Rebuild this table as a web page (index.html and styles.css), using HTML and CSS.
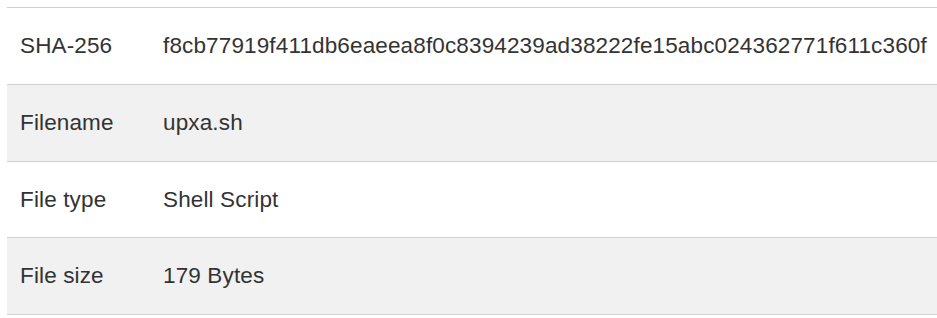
FILE: index.html
```html
<!DOCTYPE html>
<html lang="en">
<head>
    <meta charset="UTF-8">
    <meta name="viewport" content="width=device-width, initial-scale=1.0">
    <title>File details</title>
    <link rel="stylesheet" href="styles.css">
</head>
<body>
    <table class="details">
        <tbody>
            <tr>
                <th>SHA-256</th>
                <td>f8cb77919f411db6eaeea8f0c8394239ad38222fe15abc024362771f611c360f</td>
            </tr>
            <tr>
                <th>Filename</th>
                <td>upxa.sh</td>
            </tr>
            <tr>
                <th>File type</th>
                <td>Shell Script</td>
            </tr>
            <tr>
                <th>File size</th>
                <td>179 Bytes</td>
            </tr>
        </tbody>
    </table>
</body>
</html>
```

FILE: styles.css
```css
body {
    margin: 7px 0 0 7px;
    background: #fff;
    font-family: "Liberation Sans", Arial, sans-serif;
    color: #333;
}
.details {
    width: 930px;
    table-layout: fixed;
    border-collapse: collapse;
    border-bottom: 1px solid #d0d0d0;
    font-size: 22.5px;
    line-height: 33.75px;
    letter-spacing: 0.14px;
}
.details th,
.details td {
    padding: 21px 13px;
    border-top: 1px solid #d0d0d0;
    text-align: left;
    vertical-align: top;
    font-weight: normal;
    white-space: nowrap;
}
.details th {
    width: 117px;
}
.details tr:nth-child(even) {
    background: #f1f1f1;
}
```
